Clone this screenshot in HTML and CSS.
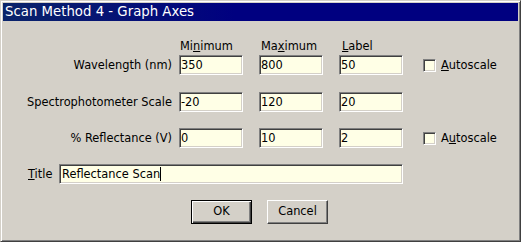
FILE: index.html
```html
<!DOCTYPE html>
<html>
	<head>
		<meta charset="UTF-8">
		<title>Scan Method 4 - Graph Axes</title>
		<link rel="stylesheet" href="styles.css">
	</head>
	<body>
		<div class="window">
			<div class="titlebar">Scan Method 4 - Graph Axes</div>
			<div class="content">
				<!--列标题-->
				<div class="row head">
					<span class="lbl"></span>
					<span class="col">Mi<u>n</u>imum</span>
					<span class="col">Ma<u>x</u>imum</span>
					<span class="col"><u>L</u>abel</span>
				</div>
				<div class="row first">
					<span class="lbl">Wavelength (nm)</span>
					<div class="field">350</div>
					<div class="field">800</div>
					<div class="field">50</div>
					<span class="check"></span>
					<span class="check-text"><u>A</u>utoscale</span>
				</div>
				<div class="row">
					<span class="lbl">Spectrophotometer Scale</span>
					<div class="field">-20</div>
					<div class="field">120</div>
					<div class="field">20</div>
				</div>
				<div class="row">
					<span class="lbl">% Reflectance (V)</span>
					<div class="field">0</div>
					<div class="field">10</div>
					<div class="field">2</div>
					<span class="check"></span>
					<span class="check-text">A<u>u</u>toscale</span>
				</div>
				<div class="row title-row">
					<span class="title-lbl"><u>T</u>itle</span>
					<div class="field wide">Reflectance Scan<span class="caret"></span></div>
				</div>
				<div class="buttons">
					<div class="btn default">OK</div>
					<div class="btn">Cancel</div>
				</div>
			</div>
		</div>
	</body>
</html>
```
FILE: styles.css
```css
body{
	margin: 0;
	padding: 0;
	background: #d4d0c8;
}
.window{
	box-sizing: border-box;
	width: 521px;
	height: 242px;
	padding: 1px;
	background: #d4d0c8;
	border-top: 1px solid #d4d0c8;
	border-left: 1px solid #d4d0c8;
	border-right: 1px solid #404040;
	border-bottom: 1px solid #404040;
	box-shadow: inset 1px 1px 0 #fff, inset -1px -1px 0 #808080;
	font-family: "DejaVu Sans", Verdana, sans-serif;
	font-size: 11.4px;
	color: #000;
}
.titlebar{
	height: 18px;
	line-height: 18px;
	margin: 1px 0 0 1px;
	width: 515px;
	padding-left: 2px;
	box-sizing: border-box;
	background: linear-gradient(to right, #0a246a, #000080 45%, #000080);
	color: #fff;
	font-size: 13.3px;
}
.content{
	padding-top: 19px;
}
.row{
	display: flex;
	align-items: center;
	height: 20px;
	margin-top: 16px;
}
.row.head{
	height: 13px;
	margin-top: 0;
	align-items: flex-end;
}
.row.first{
	margin-top: 2px;
}
.row.first + .row{
	margin-top: 17px;
}
.lbl{
	width: 170px;
	text-align: right;
	margin-right: 7px;
}
.col{
	width: 64px;
	margin-right: 16px;
	padding-left: 1px;
}
.field{
	box-sizing: border-box;
	width: 64px;
	height: 20px;
	line-height: 16px;
	margin-right: 16px;
	padding-left: 1px;
	background: #ffffe6;
	border-top: 1px solid #808080;
	border-left: 1px solid #808080;
	border-right: 1px solid #fff;
	border-bottom: 1px solid #fff;
	box-shadow: inset 1px 1px 0 #404040, inset -1px -1px 0 #d4d0c8;
	padding-top: 1px;
	white-space: nowrap;
}
.check{
	box-sizing: border-box;
	width: 13px;
	height: 13px;
	margin-left: 4px;
	margin-right: 5px;
	background: #ffffe6;
	border-top: 1px solid #808080;
	border-left: 1px solid #808080;
	border-right: 1px solid #fff;
	border-bottom: 1px solid #fff;
	box-shadow: inset 1px 1px 0 #404040, inset -1px -1px 0 #d4d0c8;
}
.title-row{
	padding-left: 26px;
}
.title-lbl{
	width: 31px;
}
.field.wide{
	width: 344px;
	padding-left: 2px;
}
.caret{
	display: inline-block;
	width: 1px;
	height: 14px;
	background: #000;
	vertical-align: middle;
	margin-top: -2px;
}
.buttons{
	display: flex;
	justify-content: center;
	gap: 15px;
	margin-top: 16px;
	padding-right: 2px;
}
.btn{
	box-sizing: border-box;
	width: 61px;
	height: 24px;
	line-height: 20px;
	text-align: center;
	border-top: 1px solid #fff;
	border-left: 1px solid #fff;
	border-right: 1px solid #404040;
	border-bottom: 1px solid #404040;
	box-shadow: inset -1px -1px 0 #808080;
}
.btn.default{
	border: 1px solid #000;
	box-shadow: inset 1px 1px 0 #fff, inset -1px -1px 0 #404040, inset -2px -2px 0 #808080;
}
```
